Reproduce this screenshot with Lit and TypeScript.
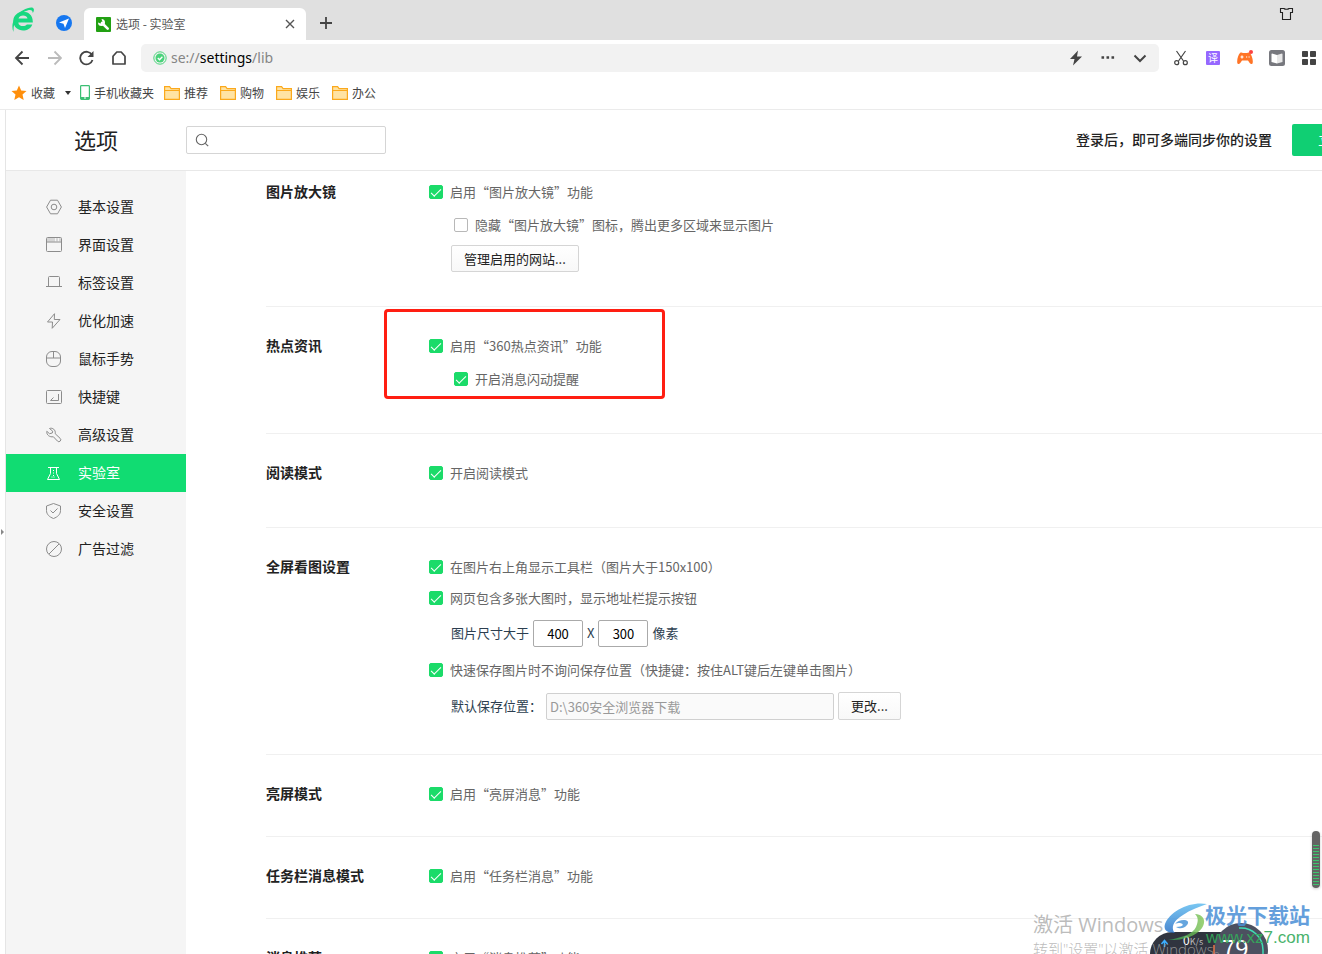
import { LitElement, html, svg, css, nothing } from "lit";
import { customElement, property } from "lit/decorators.js";
import { classMap } from "lit/directives/class-map.js";

const FONT = css`"Noto Sans CJK SC", "Noto Sans", sans-serif`;

const navItems = [
  { label: "基本设置", icon: svg`<path d="M4.500 1.200h7L15.400 8l-3.900 6.800h-7L.6 8z"/><circle cx="8" cy="8" r="2.800"/>` },
  { label: "界面设置", icon: svg`<rect x=".5" y=".5" width="15" height="14" rx="1"/><path d="M.5 5h15"/><path d="M1 2.800h8" stroke-width="3.500" opacity=".3"/><path d="M10 2.800h2M13 2.800h2" stroke-width="3" opacity=".3"/>` },
  { label: "标签设置", icon: svg`<path d="M2.500 11.500v-9a1 1 0 0 1 1-1h9a1 1 0 0 1 1 1v9M0 11.500h16"/>` },
  { label: "优化加速", icon: svg`<path d="M8.500.7 1.500 9h5l-.3 6.300L14 6.500H8.300z"/>` },
  { label: "鼠标手势", icon: svg`<rect x=".5" y=".5" width="14" height="15" rx="5.500"/><path d="M.5 7h14M7.500.5V7"/>` },
  { label: "快捷键", icon: svg`<rect x=".5" y="1.500" width="15" height="13" rx="1"/><path d="M12.500 5v6.500H4.500l3-3"/>` },
  { label: "高级设置", icon: svg`<path d="M3.500 1.500C6.500.3 10 3 9.200 6.700l5 4.700a1.900 1.900 0 0 1-2.700 2.700L7.300 9.700C4 10.500.2 8 .8 4.300l2.700 2.400 2.800-.7.400-1.800z"/>` },
  { label: "实验室", icon: svg`<path d="M2 2.500h11M4.500 2.500v6L1.500 14.500h12L10.500 8.500v-6"/><path d="M7.500 5v7" stroke-dasharray="1 1.500"/><path d="M5.500 12h4" stroke-dasharray="1 1"/>` },
  { label: "安全设置", icon: svg`<path d="M7.500.5 14.500 3v4.500c0 4-3 6.500-7 8-4-1.500-7-4-7-8V3z"/><path d="m4.500 7.500 2.500 2.500 4.500-4.500"/>` },
  { label: "广告过滤", icon: svg`<circle cx="8" cy="8" r="7.500"/><path d="M13 3 3 13"/>` },
];

@customElement("check-option")
class CheckOption extends LitElement {
  @property() label = "";
  @property({ type: Boolean }) checked = false;
  static styles = css`
    :host { display: block; }
    label { display: flex; align-items: center; gap: 7px; height: 20px; font: 13px/20px ${FONT}; color: #666; white-space: nowrap; }
    input { appearance: none; display: grid; place-items: center; width: 14px; height: 14px; margin: 0; border: 1px solid #b8b8b8; border-radius: 2px; background: #fff; }
    input:checked { border-color: #1bdb69; background: #1bdb69; }
    input:checked::after { content: ""; width: 9px; height: 4px; border: solid #fff; border-width: 0 0 1px 1px; transform: translateY(-1px) rotate(-45deg); }
  `;
  render() {
    return html`<label><input type="checkbox" .checked=${this.checked} />${this.label}</label>`;
  }
}

@customElement("browser-chrome")
class BrowserChrome extends LitElement {
  static styles = css`
    :host { display: block; font: 12px/20px ${FONT}; color: #444; }
    svg { display: block; fill: none; }
    button { border: 0; padding: 0; background: none; color: inherit; font: inherit; display: flex; align-items: center; }
    .tabs { display: flex; align-items: center; height: 40px; background: #e0e0e0; padding-left: 11px; }
    .pin { margin: 5px 12px 0 21px; }
    .tab { display: flex; align-items: center; align-self: flex-end; width: 222px; height: 32px; box-sizing: border-box; padding: 0 10px 0 12px; background: #fff; border-radius: 6px 6px 0 0; color: #555; }
    .tab span { flex: 1; padding-left: 5px; white-space: pre; }
    .plus { margin: 6px 0 0 14px; }
    .skin { margin: 0 28px 12px auto; }
    .address { display: flex; align-items: center; height: 36px; padding: 0 5px 0 14px; }
    .nav { display: flex; gap: 16px; margin-right: 15px; }
    .field { flex: 1; display: flex; align-items: center; height: 28px; background: #f2f2f2; border-radius: 5px; padding: 0 11px 0 12px; }
    .url { flex: 1; padding-left: 4px; font: 14px/20px "Noto Sans", sans-serif; color: #858585; }
    .url b { font-weight: 400; color: #000; }
    .tools { display: flex; gap: 16px; }
    .extensions { display: flex; gap: 16px; margin-left: 14px; }
    .bookmarks { display: flex; align-items: center; height: 33px; padding-left: 11px; border-bottom: 1px solid #ebebeb; }
    .bookmarks button { gap: 4px; margin-right: 12px; }
    .bookmarks .favorites { margin-right: 9px; }
    .bookmarks .phone { gap: 4px; margin-right: 10px; }
    .caret { margin-left: 6px; }
    .translate { width: 14px; height: 14px; display: grid; place-items: center; background: #9668ff; color: #fff; font: 10px/14px ${FONT}; border-radius: 1px; margin: 1px; }
  `;
  folder(label: string) {
    return html`<button>
      <svg width="16" height="16" viewBox="0 0 16 16"><path d="M.6 1.600h5l1.500 2h8.300v10.800H.6z" fill="#ffe3a3" stroke="#fba91c" stroke-width="1.200"/><path d="M.6 5.500h14.800" stroke="#fba91c"/></svg>${label}
    </button>`;
  }
  render() {
    return html`
      <div class="tabs">
        <svg width="24" height="26" viewBox="0 0 24 26"><path d="M21.800 15.400H7.300c.3 4.200 6.500 4.800 8.500 2h5.500C18 26.600 2.300 25.200 2.300 14 2.300 2.300 22.300.8 21.800 15.400zM7.500 11.600h9c-.5-4.300-8.200-4.300-9 0z" fill="#19d880" fill-rule="evenodd"/><path d="M2.500 25C-.8 18 3.500 7 12 3.200 17 .8 21.500-.6 22.700 1.800c.5 1.400.1 2.700-.9 4.200-.2-2.800-2-3.500-5.300-2.500C8.500 6 2 13.500 2.500 25z" fill="#19d880"/></svg>
        <svg class="pin" width="16" height="16" viewBox="0 0 16 16"><circle cx="8" cy="8" r="8" fill="#1677f0"/><path d="m13 3.500-4 9.500-1.500-4.200L3 7.500z" fill="#fff"/></svg>
        <div class="tab">
          <svg width="15" height="15" viewBox="0 0 15 15"><rect width="15" height="15" rx="1" fill="#22a013"/><path d="m6 6 5.700 5.700" stroke="#fff" stroke-width="2.600" stroke-linecap="round"/><path d="M5.500 2A3.500 3.500 0 1 1 2 5.500l2.500 1 2-1.500z" fill="#fff"/></svg>
          <span>选项 - 实验室</span>
          <button aria-label="关闭"><svg width="12" height="12" viewBox="0 0 12 12"><path d="m2 2 8 8m0-8-8 8" stroke="#555" stroke-width="1.400"/></svg></button>
        </div>
        <button class="plus" aria-label="新标签"><svg width="12" height="12" viewBox="0 0 12 12"><path d="M6 0v12M0 6h12" stroke="#444" stroke-width="1.800"/></svg></button>
        <button class="skin" aria-label="皮肤"><svg width="15" height="14" viewBox="0 0 15 14"><path d="M1.500 1.500H5c1 1 4 1 5 0h3.500v4h-2v7h-8v-7h-2z" stroke="#222" stroke-width="1.100"/></svg></button>
      </div>
      <div class="address">
        <div class="nav">
          <button aria-label="后退"><svg width="16" height="16" viewBox="0 0 16 16"><path d="M15 8H2m6.500-6.500L2 8l6.500 6.500" stroke="#444" stroke-width="1.800"/></svg></button>
          <button aria-label="前进"><svg width="16" height="16" viewBox="0 0 16 16"><path d="M2 8h13M8.500 1.500 15 8l-6.500 6.500" stroke="#bbb" stroke-width="1.800"/></svg></button>
          <button aria-label="刷新"><svg width="16" height="16" viewBox="0 0 16 16"><path d="M14 5A6.300 6.300 0 1 0 14.500 10" stroke="#444" stroke-width="1.800"/><path d="M15.500 1v6h-6z" fill="#444"/></svg></button>
          <button aria-label="主页"><svg width="16" height="16" viewBox="0 0 16 16"><path d="M3 6.200 6.800 2h4.400L15 6.200V14H3z" stroke="#444" stroke-width="1.700" stroke-linejoin="round"/></svg></button>
        </div>
        <div class="field">
          <svg width="14" height="14" viewBox="0 0 14 14"><circle cx="7" cy="7" r="6.200" stroke="#4bd37b"/><circle cx="7" cy="7" r="4.500" fill="#4bd37b"/><path d="m4.800 7 1.700 1.700 2.900-3" stroke="#fff" stroke-width="1.300"/></svg>
          <span class="url">se://<b>settings</b>/lib</span>
          <div class="tools">
            <button aria-label="加速"><svg width="16" height="16" viewBox="0 0 16 16"><path d="M10 .5 2 9h4.500L5 15.500 14 6.500H9z" fill="#444"/></svg></button>
            <button aria-label="更多"><svg width="16" height="16" viewBox="0 0 16 16"><path d="M1.500 7.500h2.600M6.500 7.500h2.600M11.500 7.500h2.600" stroke="#444" stroke-width="2.400"/></svg></button>
            <button aria-label="展开"><svg width="16" height="16" viewBox="0 0 16 16"><path d="m2.500 5.500 5.500 5.500 5.500-5.500" stroke="#444" stroke-width="2"/></svg></button>
          </div>
        </div>
        <div class="extensions">
          <button aria-label="截图"><svg width="16" height="16" viewBox="0 0 16 16"><path d="m3.500 1 7 10M12.500 1l-7 10" stroke="#444" stroke-width="1.200"/><circle cx="3.700" cy="12.700" r="2" stroke="#444" stroke-width="1.200"/><circle cx="12.300" cy="12.700" r="2" stroke="#444" stroke-width="1.200"/></svg></button>
          <button aria-label="翻译"><span class="translate">译</span></button>
          <button aria-label="游戏"><svg width="16" height="16" viewBox="0 0 16 16"><path d="M3 3c1-.8 2-.5 3 0h4c1-.5 2-.8 3 0 2 2.500 3.500 8 2.500 10.500-1.500 1.500-3-.5-4.500-3H5c-1.500 2.500-3 4.500-4.500 3C-.5 11 1 5 3 3z" fill="#ff7426"/><path d="M3.500 7h3M5 5.500v3M9 7h1.200M11.500 7h1.200" stroke="#fff" stroke-width="1.200"/><circle cx="14" cy="2" r="2" fill="#fb4141"/></svg></button>
          <button aria-label="阅读"><svg width="16" height="16" viewBox="0 0 16 16"><rect width="16" height="16" rx="2.500" fill="#77787e"/><path d="M3 3.500 8 5v8.500L2.500 12V4z" fill="#fff"/><path d="M13 3.500 8 5v8.500l5.500-1.500V4z" fill="#e8e8e8"/></svg></button>
          <button aria-label="应用"><svg width="16" height="16" viewBox="0 0 16 16"><path d="M1.500 1.500h5v5h-5zM9.500 1.500h5v5h-5zM1.500 9.500h5v5h-5zM9.500 9.500h5v5h-5z" fill="#444" stroke="#444" stroke-linejoin="round"/></svg></button>
        </div>
      </div>
      <div class="bookmarks">
        <button class="favorites"><svg width="16" height="16" viewBox="0 0 16 16"><path d="m8 .5 2.200 5 5.300.5-4 3.600 1.200 5.400L8 12.200 3.300 15l1.200-5.400L.5 6l5.300-.5z" fill="#ff8f0c"/></svg>收藏<svg class="caret" width="6" height="4" viewBox="0 0 6 4"><path d="M0 0h6L3 4z" fill="#333"/></svg></button>
        <button class="phone"><svg width="10" height="15" viewBox="0 0 10 15"><rect x=".6" y=".6" width="8.800" height="13.800" rx=".8" fill="#fff" stroke="#3cbf74" stroke-width="1.200"/><path d="M1 12h8v2H1z" fill="#3cbf74"/><path d="M4 13h2" stroke="#fff"/></svg>手机收藏夹</button>
        ${["推荐", "购物", "娱乐", "办公"].map((l) => this.folder(l))}
      </div>
    `;
  }
}

@customElement("app-root")
class AppRoot extends LitElement {
  static styles = css`
    :host { display: flex; flex-direction: column; position: relative; height: 100vh; overflow: hidden; background: #fff; font: 13px/20px ${FONT}; color: #666; }
    * { box-sizing: border-box; }
    svg { display: block; fill: none; }
    .page { flex: 1; min-height: 0; display: flex; flex-direction: column; margin-left: 5px; width: calc(100% + 73px); border-left: 1px solid #e5e5e5; }
    .header { display: flex; align-items: center; flex: none; height: 61px; border-bottom: 1px solid #e8e8e8; }
    h1 { margin: 0; width: 180px; padding-bottom: 2px; text-align: center; font-size: 22px; line-height: 32px; font-weight: 400; color: #222; }
    .search { display: flex; align-items: center; width: 200px; height: 28px; border: 1px solid #d5d5d5; border-radius: 2px; padding-left: 8px; }
    .search input { flex: 1; min-width: 0; border: 0; outline: 0; background: none; font: inherit; }
    .account { margin-left: auto; display: flex; align-items: center; gap: 20px; color: #222; font-size: 14px; font-weight: 500; white-space: nowrap; }
    .account span { padding-bottom: 2px; }
    .login { width: 108px; height: 32px; border: 0; border-radius: 2px; background: #10cf73; color: #fff; font: 14px/20px ${FONT}; padding: 0 0 2px; }
    .body { display: flex; flex: 1; min-height: 0; }
    nav { flex: none; width: 180px; padding-top: 17px; background: #f5f5f5; }
    nav a { display: flex; align-items: center; gap: 16px; height: 38px; padding-left: 40px; font-size: 14px; color: #222; text-decoration: none; }
    nav span { padding-bottom: 2px; }
    nav svg { stroke: #8c8c8c; }
    nav a.active { background: #11dc72; color: #fff; }
    nav a.active svg { stroke: #fff; }
    main { flex: 1; min-width: 0; overflow: hidden; padding-left: 80px; }
    section { position: relative; display: flex; padding: 29px 0 32px; border-bottom: 1px solid #f0f0f0; }
    section.first { padding: 11px 0 34px; }
    section.roomy { padding-bottom: 44px; }
    section.images { padding-bottom: 33px; }
    h2 { flex: none; margin: 0; width: 163px; font-size: 14px; line-height: 18px; font-weight: 700; color: #222; }
    .options { display: flex; flex-direction: column; align-items: flex-start; gap: 10px; }
    .images .options { gap: 11px; }
    .sub { margin: 3px 0 0 25px; }
    .row { display: flex; align-items: center; gap: 4px; height: 30px; padding-bottom: 2px; margin-left: 22px; color: #2c3e50; white-space: nowrap; }
    .row.folder { padding-bottom: 0; }
    .btn { height: 27px; border: 1px solid #d5d5d5; border-radius: 2px; background: linear-gradient(#fff, #f8f8f8); padding: 0 12px; font: inherit; color: #222; }
    .row .btn { height: 28px; }
    .manage { margin-left: 22px; }
    .size { width: 50px; height: 27px; border: 1px solid #aaa; border-radius: 2px; padding: 0; text-align: center; font: 13px/20px ${FONT}; color: #000; }
    .path { width: 288px; height: 27px; border: 1px solid #d0d0d0; border-radius: 2px; padding: 0 3px; background: #fafafa; font: inherit; color: #999; }
    .highlight { position: absolute; left: 118px; top: 2px; width: 281px; height: 90px; border: 3px solid #ff1e12; border-radius: 4px; pointer-events: none; }
    .handle { position: absolute; left: 0; top: 528px; }
    .thumb { position: absolute; right: 2px; top: 831px; width: 8px; height: 57px; padding: 14px 1px 0; border-radius: 4px; background: #636363; box-shadow: 0 1px 3px #0003; }
    .thumb::after { content: ""; display: block; height: 41px; background: repeating-linear-gradient(#3cc46d 0 1px, #636363 1px 3px); }
    .activate { position: absolute; right: 101px; bottom: -5px; width: 188px; color: #aaaaaacc; white-space: nowrap; font: 300 15px/20px "Open Sans", "Noto Sans CJK SC", sans-serif; }
    .activate strong { display: block; font-size: 20px; line-height: 28px; font-weight: 400; }
    .speed { position: absolute; right: 48px; bottom: 0; }
    .brand { position: absolute; right: 10px; bottom: 0; }
    svg text { font-family: ${FONT}; stroke: none; }
    svg .site { font-family: "Liberation Sans", sans-serif; }
  `;
  section(title: string, cls: string, content: unknown, mark: unknown = nothing) {
    return html`<section class=${cls}><h2>${title}</h2><div class="options">${content}</div>${mark}</section>`;
  }
  render() {
    return html`
      <browser-chrome></browser-chrome>
      <div class="page">
        <div class="header">
          <h1>选项</h1>
          <label class="search" aria-label="搜索">
            <svg width="14" height="14" viewBox="0 0 14 14"><circle cx="6.500" cy="6.500" r="5.200" stroke="#666" stroke-width="1.100"/><path d="m10.300 10.300 2.900 2.900" stroke="#666" stroke-width="1.200"/></svg>
            <input type="text" aria-label="搜索" />
          </label>
          <div class="account"><span>登录后，即可多端同步你的设置</span><button class="login">立即登录</button></div>
        </div>
        <div class="body">
          <nav>
            ${navItems.map((n) => html`<a href="#" class=${classMap({ active: n.label === "实验室" })}><svg width="16" height="16" viewBox="0 0 16 16">${n.icon}</svg><span>${n.label}</span></a>`)}
          </nav>
          <main>
            ${this.section("图片放大镜", "first", html`
              <check-option checked label="启用“图片放大镜”功能"></check-option>
              <check-option class="sub" label="隐藏“图片放大镜”图标，腾出更多区域来显示图片"></check-option>
              <button class="btn manage">管理启用的网站...</button>`)}
            ${this.section("热点资讯", "roomy", html`
              <check-option checked label="启用“360热点资讯”功能"></check-option>
              <check-option class="sub" checked label="开启消息闪动提醒"></check-option>`, html`<div class="highlight"></div>`)}
            ${this.section("阅读模式", "roomy", html`<check-option checked label="开启阅读模式"></check-option>`)}
            ${this.section("全屏看图设置", "images", html`
              <check-option checked label="在图片右上角显示工具栏（图片大于150x100）"></check-option>
              <check-option checked label="网页包含多张大图时，显示地址栏提示按钮"></check-option>
              <div class="row"><label for="w">图片尺寸大于</label><input id="w" class="size" .value=${"400"} /><label for="h">X</label><input id="h" class="size" .value=${"300"} />像素</div>
              <check-option checked label="快速保存图片时不询问保存位置（快捷键：按住ALT键后左键单击图片）"></check-option>
              <div class="row folder"><label for="p">默认保存位置：</label><input id="p" class="path" disabled .value=${"D:\\360安全浏览器下载"} /><button class="btn">更改...</button></div>`)}
            ${this.section("亮屏模式", "", html`<check-option checked label="启用“亮屏消息”功能"></check-option>`)}
            ${this.section("任务栏消息模式", "", html`<check-option checked label="启用“任务栏消息”功能"></check-option>`)}
            ${this.section("消息推荐", "", html`<check-option checked label="启用“消息推荐”功能"></check-option>`)}
          </main>
        </div>
      </div>
      <svg class="handle" width="5" height="8" viewBox="0 0 5 8"><path d="M1 1v6l3-3z" fill="#888"/></svg>
      <div class="thumb"></div>
      <svg class="speed" width="124" height="34" viewBox="0 0 124 34">
        <rect x="0" y="12" width="92" height="50" rx="22" fill="#30343f"/>
        <circle cx="91" cy="30" r="27" fill="#4c5060"/>
        <path d="M89 8a22 22 0 0 1 24 22v4" stroke="#3fdcb4" stroke-width="1.500"/>
        <path d="M64 25v9" stroke="#ed7548" stroke-width="1.500"/>
        <path d="M14.500 27v-6m-3 3 3-3.500 3 3.500" stroke="#3daeff" stroke-width="1.500"/>
        <text x="33" y="25" font-size="12" fill="#fff">0<tspan font-size="9" fill="#bbb">K/s</tspan></text>
        <text x="72" y="37" font-size="24" fill="#fff">79</text>
      </svg>
      <div class="activate"><strong>激活 Windows</strong>转到"设置"以激活 Windows。</div>
      <svg class="brand" width="150" height="52" viewBox="0 0 150 52">
        <defs><linearGradient id="b" x2="0" y2="1"><stop stop-color="#62bdf0"/><stop offset="1" stop-color="#2a72c8"/></linearGradient><linearGradient id="g"><stop stop-color="#2c9b58"/><stop offset="1" stop-color="#83c653"/></linearGradient></defs>
        <path d="M45 2C28-1 8 9 3 22c-2 7 3 9 10 9C8 26 12 18 21 13 28 8 37 5 45 2z" fill="url(#b)" opacity=".85"/>
        <path d="M13 22c4-6 17-5 12 1-3 4-8 4-11 2 7 0 9-3 4-4-2 0-4 0-5 1z" fill="#3f8fd6" opacity=".8"/>
        <path d="M33 12c6 0 10 4 9 9-2 11-19 18-36 17 13-2 25-6 28-13 2-5 3-9-1-13z" fill="url(#g)" opacity=".8"/>
        <text x="43" y="21" font-size="21" font-weight="700" fill="#4a8fd6" opacity=".85">极光下载站</text>
        <text class="site" x="44" y="41" font-size="17" fill="#35ab5b" opacity=".9">www.xz7.com</text>
      </svg>
    `;
  }
}
